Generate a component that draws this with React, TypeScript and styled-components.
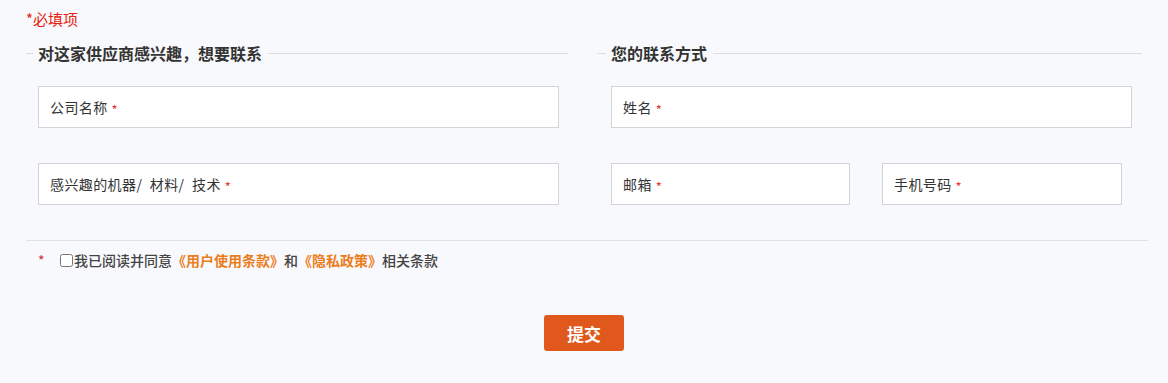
import React from "react";
import styled, { createGlobalStyle } from "styled-components";

const Global = createGlobalStyle`
  html, body {
    margin: 0;
    background: #f8f9fc;
  }
  body {
    font-family: "Noto Sans CJK SC", "Noto Sans", sans-serif;
    color: #333;
  }
`;

const Page = styled.div`
  width: 1168px;
  height: 383px;
  box-sizing: border-box;
  padding: 7px 20px 0 26px;
  background: #f8f9fc;
`;

const Required = styled.div`
  color: #e8200f;
  font-size: 15px;
  line-height: 24px;
`;

const Columns = styled.div`
  display: grid;
  grid-template-columns: 542px 545px;
  column-gap: 29px;
  margin-top: 10px;
`;

const Column = styled.div<{ $indent: number }>`
  display: flex;
  flex-direction: column;
  padding-left: ${(p) => p.$indent}px;
`;

const Legend = styled.div<{ $indent: number }>`
  display: flex;
  align-items: center;
  margin-left: -${(p) => p.$indent}px;
  height: 24px;

  &::before {
    content: "";
    width: ${(p) => p.$indent - 5}px;
    height: 1px;
    background: #dcdde2;
    margin-right: 5px;
  }
  &::after {
    content: "";
    flex: 1;
    height: 1px;
    background: #dcdde2;
    margin-left: 6px;
  }
`;

const LegendText = styled.span`
  font-size: 16px;
  font-weight: 700;
  color: #333;
`;

const Row = styled.div<{ $gap: number }>`
  display: flex;
  gap: ${(p) => p.$gap}px;
`;

const Rows = styled.div`
  display: flex;
  flex-direction: column;
  gap: 35px;
  margin-top: 21px;
`;

const Field = styled.label<{ $width: number }>`
  display: flex;
  align-items: center;
  box-sizing: border-box;
  width: ${(p) => p.$width}px;
  height: 42px;
  padding: 0 11px;
  background: #fff;
  border: 1px solid #d3d4d8;
  font-size: 14px;
  letter-spacing: 0.4px;
  word-spacing: 4px;
  color: #333;
  cursor: text;
`;

const Star = styled.span`
  color: #e8333a;
  font-size: 13px;
  margin-left: 4px;
  position: relative;
  top: 2px;
`;

const Divider = styled.div`
  height: 1px;
  background: #dfe0e4;
  margin: 35px 0 0 0;
  width: 1122px;
`;

const Agreement = styled.div`
  display: flex;
  align-items: center;
  height: 38px;
  padding-left: 12px;
  font-size: 14px;
  font-weight: 500;
  color: #444;
`;

const AgreeStar = styled.span`
  color: #d42a2a;
  font-weight: 400;
  font-size: 14px;
  width: 22px;
`;

const Check = styled.input`
  width: 13px;
  height: 13px;
  margin: 0 1px 0 0;
`;

const Link = styled.a`
  color: #ec7d1c;
  font-weight: 600;
  text-decoration: none;
`;

const Actions = styled.div`
  display: flex;
  justify-content: center;
  padding-top: 36px;
  padding-right: 6px;
`;

const Submit = styled.button`
  width: 80px;
  height: 36px;
  border: none;
  border-radius: 3px;
  background: #e0581b;
  color: #fff;
  font-family: inherit;
  font-size: 17px;
  font-weight: 700;
  cursor: pointer;
`;

function Input({ label, width }: { label: string; width: number }) {
  return (
    <Field $width={width}>
      {label}
      <Star>*</Star>
    </Field>
  );
}

export default function App() {
  return (
    <>
      <Global />
      <Page>
        <Required>*必填项</Required>
        <Columns>
          <Column $indent={12}>
            <Legend $indent={12}>
              <LegendText>对这家供应商感兴趣，想要联系</LegendText>
            </Legend>
            <Rows>
              <Input label="公司名称" width={521} />
              <Input label="感兴趣的机器/ 材料/ 技术" width={521} />
            </Rows>
          </Column>
          <Column $indent={14}>
            <Legend $indent={14}>
              <LegendText>您的联系方式</LegendText>
            </Legend>
            <Rows>
              <Input label="姓名" width={521} />
              <Row $gap={32}>
                <Input label="邮箱" width={239} />
                <Input label="手机号码" width={240} />
              </Row>
            </Rows>
          </Column>
        </Columns>
        <Divider />
        <Agreement>
          <AgreeStar>*</AgreeStar>
          <Check type="checkbox" />
          我已阅读并同意<Link href="#">《用户使用条款》</Link>和<Link href="#">《隐私政策》</Link>相关条款
        </Agreement>
        <Actions>
          <Submit>提交</Submit>
        </Actions>
      </Page>
    </>
  );
}
